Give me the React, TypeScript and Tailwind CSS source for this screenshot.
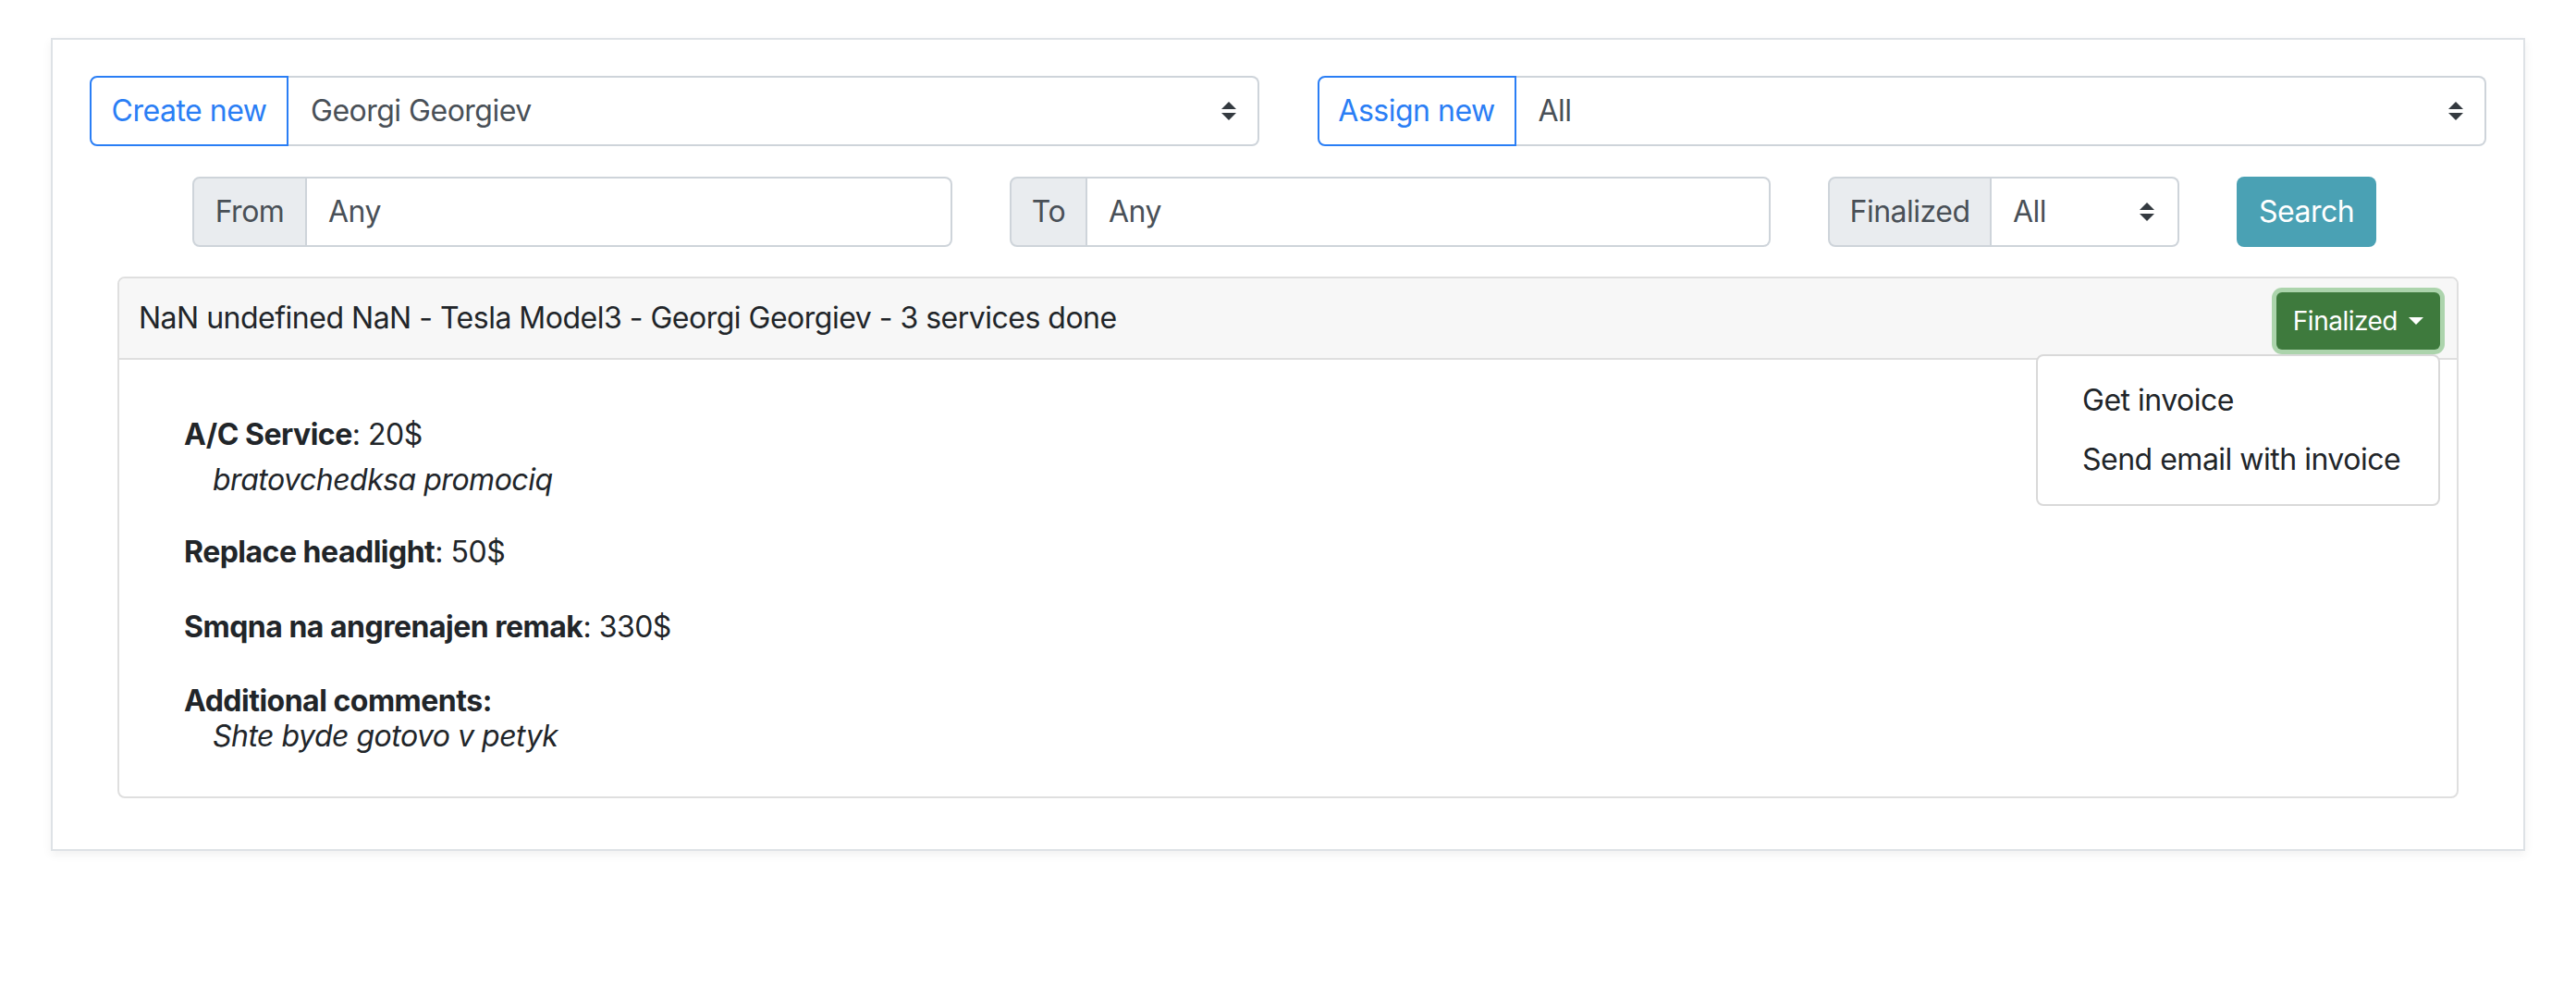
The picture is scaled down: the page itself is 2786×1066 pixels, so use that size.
function SelectArrows() {
  return (
    <svg viewBox="0 0 4 5" className="w-[16px] h-[20px] shrink-0" fill="#343a40">
      <path d="M2 0L0 2h4zm0 5L0 3h4z" />
    </svg>
  );
}

function Caret() {
  return (
    <svg viewBox="0 0 16 8" className="w-[16px] h-[8px] ml-[12px]" fill="#ffffff">
      <path d="M0 0h16L8 8z" />
    </svg>
  );
}

function AssignGroup({ label, value }: { label: string; value: string }) {
  return (
    <div className="flex flex-1 h-[76px]">
      <div className="w-[215px] shrink-0 flex items-center justify-center border-2 border-[#2a7ef5] rounded-l-[8px] text-[#2a7ef5]">
        {label}
      </div>
      <div className="flex-1 flex items-center justify-between border-2 border-l-0 border-[#ced4da] rounded-r-[8px] pl-[24px] pr-[23px] text-[#495057]">
        <span>{value}</span>
        <SelectArrows />
      </div>
    </div>
  );
}

function FilterGroup({
  label,
  value,
  labelW,
  groupW,
  select,
}: {
  label: string;
  value: string;
  labelW: string;
  groupW: string;
  select?: boolean;
}) {
  return (
    <div className={`flex h-[76px] ${groupW}`}>
      <div
        className={`${labelW} shrink-0 flex items-center justify-center bg-[#e9ecef] border-2 border-[#ced4da] rounded-l-[8px] text-[#495057]`}
      >
        {label}
      </div>
      <div className="flex-1 flex items-center justify-between border-2 border-l-0 border-[#ced4da] rounded-r-[8px] pl-[23px] pr-[25px] text-[#495057]">
        <span>{value}</span>
        {select && <SelectArrows />}
      </div>
    </div>
  );
}

const services = [
  { name: "A/C Service", price: "20$", note: "bratovchedksa promociq", gap: "mb-[30px]" },
  { name: "Replace headlight", price: "50$", gap: "mb-[33px]" },
  { name: "Smqna na angrenajen remak", price: "330$", gap: "mb-[32px]" },
];

export default function App() {
  return (
    <div className="min-h-screen bg-white font-['Inter','Liberation_Sans',sans-serif] text-[32px] leading-[48px] tracking-[-0.5px] text-[#212529]">
      <div className="mx-[55px] mt-[41px] border-2 border-[#dee2e6] bg-white shadow-[0_4px_10px_rgba(0,0,0,0.06)] px-[40px] pt-[39px] pb-[55px]">
        <div className="flex gap-[63px]">
          <AssignGroup label="Create new" value="Georgi Georgiev" />
          <AssignGroup label="Assign new" value="All" />
        </div>

        <div className="flex justify-center items-center gap-[62px] mt-[33px] pr-[8px]">
          <FilterGroup label="From" value="Any" labelW="w-[124px]" groupW="w-[822px]" />
          <FilterGroup label="To" value="Any" labelW="w-[84px]" groupW="w-[823px]" />
          <FilterGroup label="Finalized" value="All" labelW="w-[177px]" groupW="w-[380px]" select />
          <button className="w-[151px] h-[76px] rounded-[8px] bg-[#4aa1b4] text-white">Search</button>
        </div>

        <div className="mx-[30px] mt-[32px] border-2 border-[#dfdfdf] rounded-[8px]">
          <div className="h-[88px] flex items-center justify-between bg-[#f7f7f7] border-b-2 border-[#dfdfdf] rounded-t-[6px] pl-[21px] pr-[18px]">
            <span>NaN undefined NaN - Tesla Model3 - Georgi Georgiev - 3 services done</span>
            <div className="relative mt-[6px]">
              <button className="h-[62px] flex items-center px-[18px] rounded-[6px] bg-[#3e7a3d] text-white text-[28px] leading-[42px] shadow-[0_0_0_5px_#acd4ac]">
                Finalized
                <Caret />
              </button>
              <div className="absolute right-0 top-[67px] z-10 w-[437px] bg-white border-2 border-[#d9d9d9] rounded-[8px] py-[16px]">
                <div className="px-[48px] py-[8px] whitespace-nowrap">Get invoice</div>
                <div className="px-[48px] py-[8px] whitespace-nowrap">Send email with invoice</div>
              </div>
            </div>
          </div>

          <div className="pl-[70px] pt-[57px] pb-[41px]">
            {services.map((s) => (
              <div key={s.name} className={s.gap}>
                <div>
                  <b className="font-bold">{s.name}</b>: {s.price}
                </div>
                {s.note && <div className="pl-[31px] italic mt-[1px]">{s.note}</div>}
              </div>
            ))}
            <div>
              <b className="font-bold">Additional comments:</b>
            </div>
            <div className="pl-[31px] italic -mt-[10px]">Shte byde gotovo v petyk</div>
          </div>
        </div>
      </div>
    </div>
  );
}
